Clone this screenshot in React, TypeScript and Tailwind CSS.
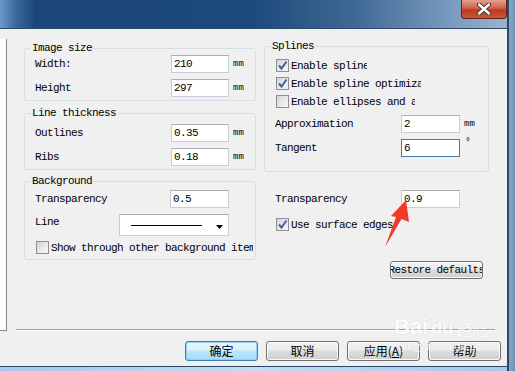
import type { ReactNode } from "react"

function TextBox({ value, w = "w-[58px]", focus = false }: { value: string; w?: string; focus?: boolean }) {
  return (
    <div
      className={`${w} h-[18px] bg-white border pl-[2px] flex items-center leading-[12px] ${
        focus ? "border-[#3d7bad]" : "border-[#c9ced6] border-t-[#abadb3]"
      }`}
    >
      {value}
    </div>
  )
}

function Check({ checked = false }: { checked?: boolean }) {
  return (
    <span className="w-[13px] h-[13px] shrink-0 border border-[#8f8f8f] bg-[linear-gradient(135deg,#cfd3d9_0%,#e6e8eb_50%,#f7f7f7_100%)] flex items-center justify-center">
      {checked && (
        <svg width="11" height="11" viewBox="0 0 11 11">
          <path d="M2 5.5 L4.5 8.5 L9.5 1.5" fill="none" stroke="#4a5f9e" strokeWidth="2" />
        </svg>
      )}
    </span>
  )
}

function Group({ title, className, children }: { title: string; className: string; children: ReactNode }) {
  return (
    <fieldset className={`border border-[#d5dfe5] rounded-[3px] ${className}`}>
      <legend className="ml-[6px] px-[1px] leading-[12px]">{title}</legend>
      {children}
    </fieldset>
  )
}

function Btn({ children, primary = false }: { children: ReactNode; primary?: boolean }) {
  return (
    <div
      className={`w-[73px] h-[20px] rounded-[3px] border flex items-center justify-center tracking-normal text-[12px] font-['Noto_Sans_CJK_SC',sans-serif] ${
        primary
          ? "border-[#3c7fb1] bg-[linear-gradient(#eaf6fd_0%,#d9f0fc_45%,#bee6fd_50%,#a7d9f5_100%)] shadow-[inset_0_0_0_1px_#8fd3f7]"
          : "border-[#707070] bg-[linear-gradient(#f2f2f2_0%,#ebebeb_45%,#dddddd_50%,#cfcfcf_100%)] shadow-[inset_0_0_0_1px_#fcfcfc]"
      }`}
    >
      {children}
    </div>
  )
}

export default function App() {
  return (
    <div className="relative w-[515px] h-[371px] overflow-hidden flex bg-[#7d9dc2] text-black text-[11px] leading-[12px] tracking-[-0.6px] font-['Liberation_Mono',monospace]">
      <div className="w-[507px] flex flex-col">
        {/* title bar */}
        <div className="h-[29px] shrink-0 border-b border-[#2b4669] flex justify-end bg-[linear-gradient(to_right,#6c9ac8_0%,#3c6a9c_3%,#1b4778_7%,#1c4a7b_50%,#3f6995_70%,#7898bd_88%,#9bb2cc_100%)]">
          <div className="w-[46px] h-[19px] rounded-b-[4px] border border-t-0 border-[#5e2417] bg-[linear-gradient(#e3a08f_0%,#d0624a_45%,#bf3a21_55%,#c9563a_100%)] flex items-center justify-center">
            <svg width="16" height="12" viewBox="0 0 16 12">
              <path d="M3 1.5 L13 10.5 M13 1.5 L3 10.5" stroke="#3a2a2a" strokeWidth="4.2" strokeLinecap="round" />
              <path d="M3 1.5 L13 10.5 M13 1.5 L3 10.5" stroke="#ffffff" strokeWidth="2.4" strokeLinecap="round" />
            </svg>
          </div>
        </div>

        {/* client area */}
        <div className="h-[337px] shrink-0 bg-[#f0f0f0] flex">
          <div className="w-[7px] h-[292px] mt-[10px] bg-white border-r border-b border-[#828790]" />

          <div className="ml-[9px] flex-1 flex flex-col">
            <div className="h-[300px] pl-[8px] flex gap-[8px]">
              {/* left column */}
              <div className="w-[232px] flex flex-col">
                <Group title="Image size" className="mt-[13px]">
                  <div className="pt-[1px] pb-[3px] flex flex-col gap-[6px]">
                    <div className="h-[18px] flex items-center">
                      <span className="w-[146px] pl-[10px]">Width:</span>
                      <TextBox value="210" />
                      <span className="ml-[4px] text-[9px] tracking-normal">mm</span>
                    </div>
                    <div className="h-[18px] flex items-center">
                      <span className="w-[146px] pl-[10px]">Height</span>
                      <TextBox value="297" />
                      <span className="ml-[4px] text-[9px] tracking-normal">mm</span>
                    </div>
                  </div>
                </Group>

                <Group title="Line thickness" className="mt-[6px]">
                  <div className="pt-[5px] pb-[3px] flex flex-col gap-[6px]">
                    <div className="h-[18px] flex items-center">
                      <span className="w-[146px] pl-[10px]">Outlines</span>
                      <TextBox value="0.35" />
                      <span className="ml-[4px] text-[9px] tracking-normal">mm</span>
                    </div>
                    <div className="h-[18px] flex items-center">
                      <span className="w-[146px] pl-[10px]">Ribs</span>
                      <TextBox value="0.18" />
                      <span className="ml-[4px] text-[9px] tracking-normal">mm</span>
                    </div>
                  </div>
                </Group>

                <Group title="Background" className="mt-[5px]">
                  <div className="pt-[3px] pb-[5px] flex flex-col">
                    <div className="h-[18px] flex items-center">
                      <span className="w-[145px] pl-[10px]">Transparency</span>
                      <TextBox value="0.5" w="w-[59px]" />
                    </div>
                    <div className="h-[22px] mt-[6px] flex items-center">
                      <span className="w-[94px] pl-[10px] self-start pt-[2px]">Line</span>
                      <div className="w-[110px] h-[22px] bg-white border border-[#c9ced6] border-t-[#abadb3] flex items-center pl-[11px] pr-[3px]">
                        <div className="w-[71px] h-[1px] bg-black" />
                        <svg className="ml-auto mr-[2px] mt-[3px]" width="7" height="4" viewBox="0 0 7 4">
                          <path d="M0 0 L7 0 L3.5 4 Z" fill="#000" />
                        </svg>
                      </div>
                    </div>
                    <div className="h-[13px] mt-[5px] flex items-center pl-[11px]">
                      <Check />
                      <span className="ml-[2px] whitespace-nowrap overflow-hidden w-[202px]">Show through other background items</span>
                    </div>
                  </div>
                </Group>
              </div>

              {/* right column */}
              <div className="w-[225px] flex flex-col">
                <Group title="Splines" className="mt-[11px]">
                  <div className="pt-[7px] pb-[14px] flex flex-col">
                    <div className="h-[13px] flex items-center pl-[11px]">
                      <Check checked />
                      <span className="ml-[2px] whitespace-nowrap overflow-hidden w-[76px]">Enable splines</span>
                    </div>
                    <div className="h-[13px] mt-[5px] flex items-center pl-[11px]">
                      <Check checked />
                      <span className="ml-[2px] whitespace-nowrap overflow-hidden w-[130px]">Enable spline optimization</span>
                    </div>
                    <div className="h-[13px] mt-[5px] flex items-center pl-[11px]">
                      <Check />
                      <span className="ml-[2px] whitespace-nowrap overflow-hidden w-[124px]">Enable ellipses and arcs</span>
                    </div>
                    <div className="h-[18px] mt-[7px] flex items-center">
                      <span className="w-[136px] pl-[10px]">Approximation</span>
                      <TextBox value="2" w="w-[59px]" />
                      <span className="ml-[4px] text-[9px] tracking-normal">mm</span>
                    </div>
                    <div className="h-[18px] mt-[6px] flex items-center">
                      <span className="w-[136px] pl-[10px]">Tangent</span>
                      <TextBox value="6" w="w-[59px]" focus />
                      <span className="ml-[5px] self-start -mt-[2px] text-[10px] tracking-normal">°</span>
                    </div>
                  </div>
                </Group>

                <div className="h-[18px] mt-[18px] flex items-center">
                  <span className="w-[137px] pl-[11px]">Transparency</span>
                  <TextBox value="0.9" w="w-[59px]" />
                </div>
                <div className="h-[13px] mt-[10px] flex items-center pl-[12px]">
                  <Check checked />
                  <span className="ml-[2px] whitespace-nowrap">Use surface edges</span>
                </div>
                <div className="mt-[30px] mr-[6px] self-end w-[93px] h-[18px] rounded-[3px] border border-[#707070] bg-[linear-gradient(#f2f2f2_0%,#ebebeb_45%,#dddddd_50%,#cfcfcf_100%)] shadow-[inset_0_0_0_1px_#fcfcfc] overflow-hidden flex items-center justify-center">
                  <span className="whitespace-nowrap">Restore defaults</span>
                </div>
              </div>
            </div>

            <div className="w-[479px] h-[2px] border-t border-b border-t-[#a0a0a0] border-b-white" />

            <div className="mt-[10px] pr-[6px] flex justify-end gap-[8px]">
              <Btn primary>确定</Btn>
              <Btn>取消</Btn>
              <Btn>
                应用(<span className="underline">A</span>)
              </Btn>
              <Btn>帮助</Btn>
            </div>
          </div>
        </div>

        <div className="h-[1px] bg-[#2b4669]" />
        <div className="h-[4px] bg-[linear-gradient(to_right,#a6c8ec,#c3dbf3,#a6c8ec)]" />
      </div>

      <div className="w-[8px] border-l-[2px] border-[#2b4669] bg-[linear-gradient(to_right,#8aa7c8,#6f8fb4)]" />

      {/* watermark */}
      <div className="absolute left-[394px] top-[316px] pointer-events-none opacity-80 text-white tracking-normal [text-shadow:0_0_1px_#c8c8c8] font-['Liberation_Sans',sans-serif]">
        <div className="flex items-end gap-[3px]">
          <span className="text-[22px] leading-[22px] font-bold">Bai</span>
          <span className="text-[18px] leading-[20px] font-bold">du</span>
          <span className="text-[16px] leading-[18px] font-['Noto_Sans_CJK_SC',sans-serif]">经验</span>
        </div>
        <div className="text-[11px] leading-[12px] mt-[2px] pl-[8px]">jingyan.baidu.com</div>
      </div>

      {/* red arrow */}
      <svg className="absolute left-0 top-0 pointer-events-none" width="515" height="371" viewBox="0 0 515 371">
        <path d="M406 200 L409 222 L401.5 219 L385 247 L396 217 L391 216 Z" fill="#ee3b2a" />
      </svg>
    </div>
  )
}
